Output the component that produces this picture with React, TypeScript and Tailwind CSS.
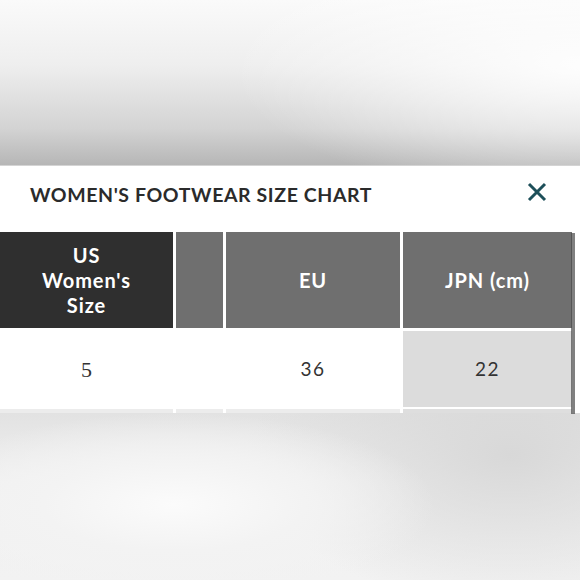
import React from "react";

export default function App() {
  const head = "flex items-center justify-center text-center text-white font-bold text-[20px] leading-[25px] tracking-[0.9px]";
  return (
    <div className="w-[580px] h-[580px] flex flex-col overflow-hidden font-['Lato','Noto_Sans',sans-serif] bg-white">
      <div className="h-[165px] shrink-0 bg-[radial-gradient(ellipse_60%_80%_at_100%_40%,rgba(255,255,255,0.9)_0%,rgba(255,255,255,0)_100%),linear-gradient(to_bottom,#fafafa_0%,#eeeeee_40%,#d3d3d3_78%,#b6b6b6_100%)]" />
      <div className="relative h-[244px] shrink-0 bg-white border-t border-[#d4d4d4]">
        <div className="h-[66px] flex items-start justify-between pl-[30px] pr-[33px]">
          <h1 className="text-[#2b2b2b] font-bold text-[19.5px] leading-[20px] tracking-[0.6px] mt-[19px]">WOMEN'S FOOTWEAR SIZE CHART</h1>
          <svg width="20" height="20" viewBox="0 0 20 20" className="mt-[16px]">
            <path d="M2 2 L18 18 M18 2 L2 18" stroke="#1d4f59" strokeWidth="3" strokeLinecap="butt" />
          </svg>
        </div>
        <div className="grid grid-cols-[173px_47px_174px_169px] gap-x-[3px] gap-y-[3px]">
          <div className={`${head} h-[96px] bg-[#2f2f2f] flex-col`}>
            <span>US</span>
            <span>Women's</span>
            <span>Size</span>
          </div>
          <div className="h-[96px] bg-[#6f6f6f]" />
          <div className={`${head} h-[96px] bg-[#6f6f6f]`}>EU</div>
          <div className={`${head} h-[96px] bg-[#6f6f6f]`}>JPN (cm)</div>
          <div className="h-[76px] flex items-center justify-center text-[#333] text-[22px] font-['Liberation_Serif']">5</div>
          <div className="h-[76px]" />
          <div className="h-[76px] flex items-center justify-center text-[#333] text-[19px] tracking-[1.5px]">36</div>
          <div className="h-[76px] flex items-center justify-center text-[#333] text-[19px] tracking-[1.5px] bg-[#dcdcdc]">22</div>
        </div>
        <div className="absolute left-[571px] top-[67px] w-[4px] h-[181px] bg-[#4a4a4a]/70" />
      </div>
      <div className="h-[4px] shrink-0 grid grid-cols-[173px_47px_174px_169px] gap-x-[3px] bg-white">
        <div className="bg-[#ececec]" />
        <div className="bg-[#ececec]" />
        <div className="bg-[#ececec]" />
        <div className="bg-[#dedede]" />
      </div>
      <div className="flex-1 bg-[radial-gradient(ellipse_45%_55%_at_30%_55%,#fbfbfb_0%,#f3f3f3_50%,rgba(243,243,243,0)_100%),radial-gradient(ellipse_45%_90%_at_88%_25%,#d8d8d8_0%,rgba(216,216,216,0)_100%),linear-gradient(to_bottom,#e2e2e2_0%,#f0f0f0_40%,#f2f2f2_100%)]" />
    </div>
  );
}
